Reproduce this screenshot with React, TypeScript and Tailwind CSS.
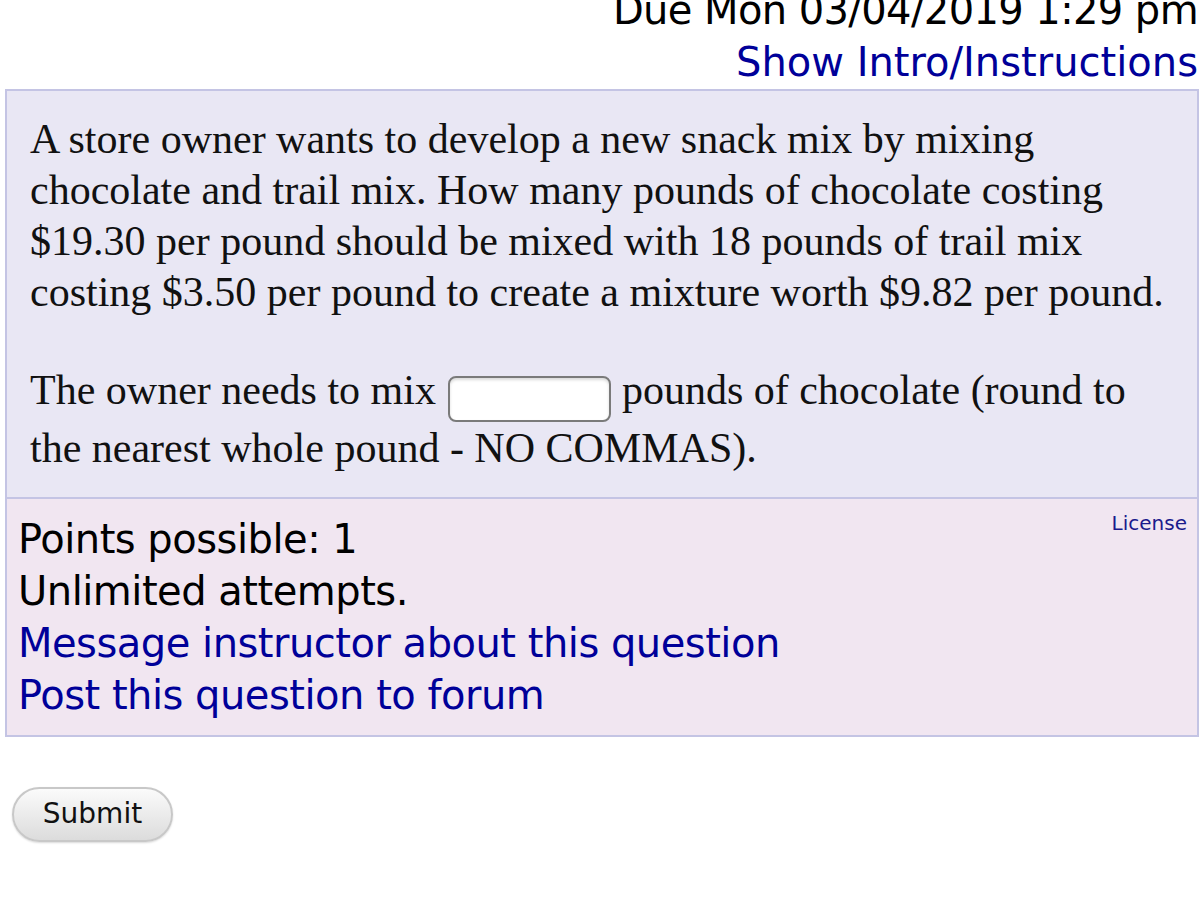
import React from "react";

const sans = { fontFamily: '"DejaVu Sans", Verdana, sans-serif' };

export default function App() {
  return (
    <div className="w-[1200px] h-[899px] bg-white overflow-hidden text-black" style={sans}>
      <div className="flex flex-col items-end pr-[2px] mt-[-16px] text-[40px] leading-[52px]">
        <div className="tracking-[-0.6px]">Due Mon 03/04/2019 1:29 pm</div>
        <a className="text-[#000099]">Show Intro/Instructions</a>
      </div>

      <div className="ml-[5px] mr-[1px] mt-[1px] border-2 border-[#c4c4e4] bg-[#e9e7f4]">
        <div
          className="pl-[23px] pr-[24px] pt-[23px] pb-[22px] text-[42px] leading-[51px] text-[#111]"
          style={{ fontFamily: '"Liberation Serif", "Times New Roman", serif' }}
        >
          <p>
            A store owner wants to develop a new snack mix by mixing chocolate and trail mix. How many
            pounds of chocolate costing $19.30 per pound should be mixed with 18 pounds of trail mix
            costing $3.50 per pound to create a mixture worth $9.82 per pound.
          </p>
          <p className="mt-[46px] leading-[53px]">
            The owner needs to mix{" "}
            <input
              type="text"
              className="ml-[2px] w-[163px] h-[46px] align-[-8px] rounded-[8px] border-2 border-[#7a7a7a] bg-white shadow-[inset_0_2px_3px_rgba(0,0,0,0.15)]"
            />{" "}
            pounds of chocolate (round to the nearest whole pound - NO COMMAS).
          </p>
        </div>

        <div className="relative border-t-2 border-[#c4c4e4] bg-[#f1e6f1] pl-[11px] pt-[14px] pb-[14px] text-[40px] leading-[52px] tracking-[-0.5px]">
          <a className="absolute right-[10px] top-[10px] text-[20px] leading-[28px] tracking-normal text-[#1a1a8c]">
            License
          </a>
          <div>Points possible: 1</div>
          <div>Unlimited attempts.</div>
          <a className="block text-[#000099]">Message instructor about this question</a>
          <a className="block text-[#000099]">Post this question to forum</a>
        </div>
      </div>

      <div className="pl-[12px] pt-[50px]">
        <button className="w-[161px] h-[55px] rounded-full border-2 border-[#c8c8c8] bg-gradient-to-b from-[#fbfbfb] to-[#dcdcdc] text-[28px] text-[#111] shadow-[0_1px_2px_rgba(0,0,0,0.15)]">
          Submit
        </button>
      </div>
    </div>
  );
}
